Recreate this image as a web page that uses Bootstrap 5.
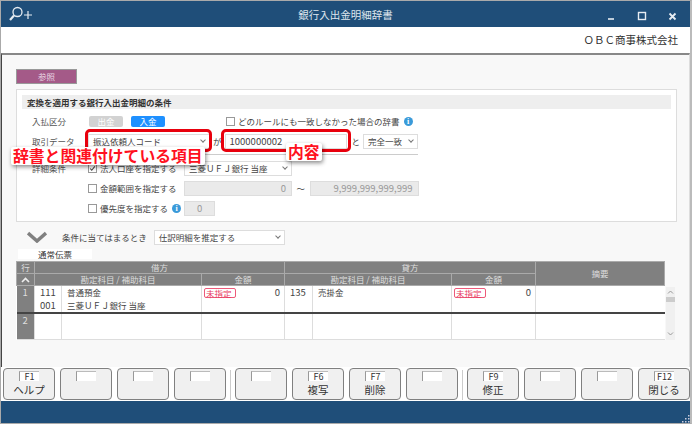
<!DOCTYPE html>
<html lang="ja"><head><meta charset="utf-8"><title>銀行入出金明細辞書</title>
<link href="https://cdn.jsdelivr.net/npm/bootstrap@5.3.0/dist/css/bootstrap.min.css" rel="stylesheet">
<style>
html,body{margin:0;width:692px;height:424px;overflow:hidden;background:#fff}
body{font-family:"Noto Sans CJK JP","Liberation Sans",sans-serif;font-size:8.5px;line-height:14px;color:#444}
.win{width:692px;height:424px;position:relative;border-top:1px solid #aaa;border-left:1px solid #aaa;border-right:2px solid #bbb;border-bottom:1px solid #aaa}
.tbar{height:26px;background:#1f4e79;color:#dfe6ee;font-size:10.5px;padding-right:9px}
.tname{left:0;right:0;top:7px;text-align:center;line-height:14px}
.corp{height:26px;padding-right:12px;font-size:10.5px;color:#333}
.main{height:314px;background:#f8f8f8;border-top:2px solid #888;border-left:1px solid #444;border-right:1px solid #ddd;padding:14px 14px 0 14px}
.refb{width:61px;height:15px;background:#a45a88;border:1px solid #999;color:#e9d5e2;line-height:13px;text-align:center}
.pane{width:661px;height:133px;margin-top:5px;background:#fff;border:1px solid #ddd;padding:5px 5px 0 5px}
.ph{height:14px;background:#eee;font-weight:700;line-height:14px;padding-left:5px;color:#333}
.lbl{width:56px;padding-left:10px;box-sizing:content-box;color:#555;flex:none}
.rw{height:20px}
.rw-a{margin-top:2px}
.rw-c{margin-top:3px}
.ind{margin-left:66px}
.uline{border-bottom:1px solid #ccc;height:24px;padding-bottom:3px;width:330px}
.pill{width:34px;height:11px;border-radius:2px;line-height:11px;text-align:center;color:#fff}
.pg{background:#d2d2d2}.pb{background:#1e90ff}
.gap-pill{gap:8px;margin-left:1px}
.anyrule{margin-left:61px}
.cb{width:9px;height:9px;border:1px solid #999;background:#fff;flex:none;margin-right:3px}
.cbtxt{width:84px;flex:none}
.sel{height:15px;background:#fff;border:1px solid #ddd;padding:0 4px;color:#444;line-height:13px;flex:none}
.w122{width:122px}.w55{width:55px}.w108{width:108px}.w109{width:109px}.w31{width:31px}.w131{width:131px}
.mga{margin:0 3px}.mto{margin:0 3px 0 5px}.mwave{margin:0 4.500px}.mkey{margin-left:7px}
.caret{width:4px;height:4px;border-right:1px solid #777;border-bottom:1px solid #777;transform:rotate(45deg);margin-top:-2px;flex:none}
.inp{height:15px;background:#eaeaea;border:1px solid #ddd;color:#999;text-align:right;padding:0 5px;line-height:13px;flex:none}
.num{font-size:9.500px}
.info{width:9px;height:9px;border-radius:50%;background:#3a9ad9;color:#fff;font:700 8px/9px "Liberation Serif",serif;text-align:center;flex:none;margin-left:4px}
.info-b{margin-right:3px}
.tabn{width:74px;height:10px;background:#fff;margin-left:2px;padding-left:20px;line-height:10px;color:#333}
.whenrow{height:24px;margin-top:3px}
.chev{margin:0 15px 0 11px;flex:none}
.gwrap{margin-top:2px}
.gtable{width:648px;table-layout:fixed;border-collapse:collapse;background:#fff}
.gtable th{background:#808080;color:#ddd;font-weight:400;text-align:center;line-height:11px;height:12px;padding:0;border:1px solid #aaa;overflow:hidden}
.gtable th svg{display:block;margin:0 auto}
.gtable td{padding:0 0 0 5px;height:13px;line-height:12.500px;border-left:1px solid #ddd;color:#444;vertical-align:top}
.gtable td.rn{background:#808080;color:#ddd;text-align:center;padding:0;border:0;border-bottom:2px solid #444;font-size:9.500px}
.gtable .er td{border-bottom:2px solid #444}
.gtable td.amt{border-bottom:2px solid #444}
.gtable td.memo{border-bottom:2px solid #444}
.gtable .le td{border-bottom:1px solid #ddd;height:26px}
.gtable td.amt{padding:0 4px 0 2px}
.gtable .num{font-size:9.500px}
.miss{display:block;border:1px solid #ee5a7a;border-radius:2px;color:#e83a60;line-height:8px;padding:0 1px;height:10px;margin-top:2px;width:32px;white-space:nowrap;background:#fff}
.sbar{width:11px;height:53px;background:#f0f0f0;margin-top:26px;margin-left:1px;padding-top:3px}
.sthumb{height:5px;background:#ccc;margin-top:3px}
.fk{height:34px;padding:1px 2px 0 2px;background:#fff;gap:5px}
.fkey{width:52px;height:32px;border:1px solid #808080;border-radius:4px;background:#f0f0f0;flex:none;padding-top:2px}
.ftag{width:20px;height:10px;background:#fff;border-left:1px solid #999;border-top:1px solid #bbb;font-size:9px;line-height:9px;text-align:center;color:#333}
.fname{font-size:10.500px;line-height:15px;color:#333;margin-top:1px;white-space:nowrap}
.fsep{width:1px;height:30px;background:#ccc;margin:0 -1px;flex:none;align-self:center}
.foot{height:22px;background:#1f4e79}
.redbox{position:absolute;border:3px solid #e8000d;border-radius:5px;top:128px;height:23px}
.rb1{left:84px;width:127px}.rb2{left:220px;width:130px}
.note{position:absolute;color:#ff1020;font-weight:700;font-size:15.800px;line-height:18px;white-space:nowrap;background:#fff;padding:0 2px;box-shadow:1px 2px 4px rgba(0,0,0,.45);border-radius:2px}
.n1{left:10px;top:146px}.n2{left:285px;top:142px}
</style></head><body>
<div class="win d-flex flex-column">
 <div class="tbar d-flex align-items-center justify-content-between position-relative">
  <svg width="26" height="18" viewBox="0 0 26 18" class="ms-2" fill="none" stroke="#e6ecf2"><circle cx="8.500" cy="7" r="4.500" stroke-width="1.300"/><path d="M5 10.500l-4 4.500" stroke-width="2.200"/><path d="M15 10h8M19 6v8" stroke-width="1.200"/></svg>
  <div class="tname position-absolute">銀行入出金明細辞書</div>
  <svg width="80" height="14" viewBox="0 0 80 14" fill="none" stroke="#e6ecf2"><path d="M7 12h6" stroke-width="1.600"/><rect x="37.500" y="5.500" width="7" height="7" stroke-width="1.400"/><path d="M68.500 6.500l6 6M74.500 6.500l-6 6" stroke-width="1.800"/></svg>
 </div>
 <div class="corp d-flex align-items-center justify-content-end">ＯＢＣ商事株式会社</div>
 <div class="main">
  <div class="refb">参照</div>
  <div class="pane">
   <div class="ph">変換を適用する銀行入出金明細の条件</div>
   <div class="rw rw-a d-flex align-items-center"><div class="lbl">入払区分</div><div class="d-flex gap-pill"><div class="pill pg">出金</div><div class="pill pb">入金</div></div><div class="d-flex align-items-center anyrule"><div class="cb"></div>どのルールにも一致しなかった場合の辞書<div class="info">i</div></div></div>
   <div class="d-flex align-items-start"><div class="lbl rw d-flex align-items-center">取引データ</div><div class="uline d-flex align-items-center"><div class="sel w122 d-flex align-items-center justify-content-between">振込依頼人コード<span class="caret"></span></div><span class="mga">が</span><div class="sel w122 num">1000000002</div><span class="mto">と</span><div class="sel w55 d-flex align-items-center justify-content-between">完全一致<span class="caret"></span></div></div></div>
   <div class="rw rw-c d-flex align-items-center"><div class="lbl">詳細条件</div><div class="cb d-flex align-items-center justify-content-center"><svg width="9" height="9" viewBox="0 0 9 9" fill="none" stroke="#444" stroke-width="1.300"><path d="M1.500 4.500l2 2.200 4-5"/></svg></div><span class="cbtxt">法人口座を指定する</span><div class="sel w108 d-flex align-items-center justify-content-between">三菱ＵＦＪ銀行 当座<span class="caret"></span></div></div>
   <div class="rw d-flex align-items-center ind"><div class="cb"></div><span class="cbtxt">金額範囲を指定する</span><div class="inp w108 num">0</div><span class="mwave">～</span><div class="inp w109 num">9,999,999,999,999</div></div>
   <div class="rw d-flex align-items-center ind"><div class="cb"></div><span>優先度を指定する</span><div class="info info-b">i</div><div class="inp w31 num text-center">0</div></div>
  </div>
  <div class="whenrow d-flex align-items-center">
   <svg class="chev" width="20" height="12" viewBox="0 0 20 12" fill="none" stroke="#808080" stroke-width="3.500"><path d="M1 2l9 8 9-8"/></svg>
   <span>条件に当てはまるとき</span>
   <div class="sel w131 mkey d-flex align-items-center justify-content-between">仕訳明細を推定する<span class="caret"></span></div>
  </div>
  <div class="tabn">通常伝票</div>
  <div class="d-flex gwrap">
  <table class="gtable mb-0">
   <colgroup><col style="width:18px"><col style="width:27px"><col style="width:140px"><col style="width:83px"><col style="width:28px"><col style="width:139px"><col style="width:84px"><col style="width:129px"></colgroup>
   <thead><tr><th>行</th><th colspan="3">借方</th><th colspan="3">貸方</th><th rowspan="2">摘要</th></tr>
   <tr><th><svg width="9" height="6" viewBox="0 0 9 6" fill="none" stroke="#eee" stroke-width="1.600"><path d="M1 5l3.500-3.500L8 5"/></svg></th><th colspan="2">勘定科目 / 補助科目</th><th>金額</th><th colspan="2">勘定科目 / 補助科目</th><th>金額</th></tr></thead>
   <tbody>
    <tr><td class="rn" rowspan="2">1</td><td class="num">111</td><td>普通預金</td><td class="amt" rowspan="2"><div class="d-flex justify-content-between"><span class="miss">未指定</span><span class="num">0</span></div></td><td class="num">135</td><td>売掛金</td><td class="amt" rowspan="2"><div class="d-flex justify-content-between"><span class="miss">未指定</span><span class="num">0</span></div></td><td class="memo" rowspan="2"></td></tr>
    <tr class="er"><td class="num">001</td><td>三菱ＵＦＪ銀行 当座</td><td></td><td></td></tr>
    <tr class="le"><td class="rn">2</td><td></td><td></td><td></td><td></td><td></td><td></td><td></td></tr>
   </tbody>
  </table>
  <div class="sbar d-flex flex-column align-items-center">
   <svg width="7" height="4" viewBox="0 0 7 4" fill="none" stroke="#999"><path d="M1 3.500l2.500-2.500L6 3.500"/></svg>
   <div class="sthumb w-100"></div>
   <svg class="mt-auto mb-1" width="7" height="4" viewBox="0 0 7 4" fill="none" stroke="#999"><path d="M1 .5l2.500 2.500L6 .5"/></svg>
  </div>
  </div>
 </div>
 <div class="fk d-flex">
  <div class="fkey d-flex flex-column align-items-center"><div class="ftag">F1</div><div class="fname">ヘルプ</div></div>
  <div class="fkey d-flex flex-column align-items-center"><div class="ftag"></div></div>
  <div class="fkey d-flex flex-column align-items-center"><div class="ftag"></div></div>
  <div class="fkey d-flex flex-column align-items-center"><div class="ftag"></div></div>
  <div class="fsep"></div>
  <div class="fkey d-flex flex-column align-items-center"><div class="ftag"></div></div>
  <div class="fkey d-flex flex-column align-items-center"><div class="ftag">F6</div><div class="fname">複写</div></div>
  <div class="fkey d-flex flex-column align-items-center"><div class="ftag">F7</div><div class="fname">削除</div></div>
  <div class="fkey d-flex flex-column align-items-center"><div class="ftag"></div></div>
  <div class="fsep"></div>
  <div class="fkey d-flex flex-column align-items-center"><div class="ftag">F9</div><div class="fname">修正</div></div>
  <div class="fkey d-flex flex-column align-items-center"><div class="ftag"></div></div>
  <div class="fkey d-flex flex-column align-items-center"><div class="ftag"></div></div>
  <div class="fkey d-flex flex-column align-items-center"><div class="ftag">F12</div><div class="fname">閉じる</div></div>
 </div>
 <div class="foot flex-grow-1 d-flex justify-content-end align-items-end">
  <svg width="10" height="10" viewBox="0 0 10 10" fill="#ccd"><rect x="8" y="8" width="1.500" height="1.500"/><rect x="5" y="8" width="1.500" height="1.500"/><rect x="2" y="8" width="1.500" height="1.500"/><rect x="8" y="5" width="1.500" height="1.500"/><rect x="5" y="5" width="1.500" height="1.500"/><rect x="8" y="2" width="1.500" height="1.500"/></svg>
 </div>
 <div class="redbox rb1"></div>
 <div class="redbox rb2"></div>
 <div class="note n1">辞書と関連付けている項目</div>
 <div class="note n2">内容</div>
</div>
</body></html>
